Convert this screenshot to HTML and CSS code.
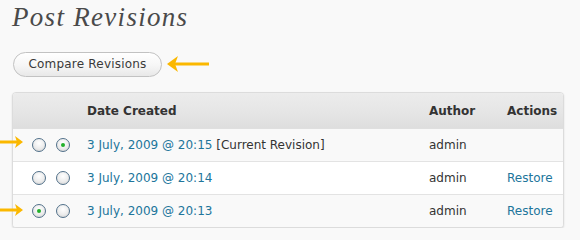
FILE: index.html
```html
<!DOCTYPE html>
<html>
<head>
<meta charset="utf-8">
<link rel="stylesheet" href="styles.css">
</head>
<body>
<div class="page">
  <h2 class="title">Post Revisions</h2>
  <div class="toolbar">
    <button class="btn">Compare Revisions</button>
    <svg class="arrow arrow-left" width="44" height="20" viewBox="0 0 44 20">
      <path d="M4 10 H42" stroke="#fbb800" stroke-width="3" fill="none"/>
      <path d="M0 10 L11 2 L8 10 L11 18 Z" fill="#fbb800"/>
    </svg>
  </div>
  <div class="table-box">
    <table class="revisions">
      <colgroup>
        <col class="c-r1"><col class="c-r2"><col class="c-date"><col class="c-author"><col class="c-actions">
      </colgroup>
      <thead>
        <tr><th></th><th></th><th class="h-date">Date Created</th><th>Author</th><th>Actions</th></tr>
      </thead>
      <tbody>
        <tr class="alt">
          <td class="r1"><span class="radio"></span></td>
          <td><span class="radio checked"></span></td>
          <td><a href="#">3 July, 2009 @ 20:15</a> [Current Revision]</td>
          <td>admin</td>
          <td></td>
        </tr>
        <tr>
          <td class="r1"><span class="radio"></span></td>
          <td><span class="radio"></span></td>
          <td><a href="#">3 July, 2009 @ 20:14</a></td>
          <td>admin</td>
          <td><a href="#">Restore</a></td>
        </tr>
        <tr class="alt">
          <td class="r1"><span class="radio checked"></span></td>
          <td><span class="radio"></span></td>
          <td><a href="#">3 July, 2009 @ 20:13</a></td>
          <td>admin</td>
          <td><a href="#">Restore</a></td>
        </tr>
      </tbody>
    </table>
  </div>
  <svg class="arrow arrow-row arrow-row1" width="24" height="14" viewBox="0 0 24 14">
    <path d="M0 7 H18" stroke="#fbb800" stroke-width="3" fill="none"/>
    <path d="M23 7 L15 1 L17 7 L15 13 Z" fill="#fbb800"/>
  </svg>
  <svg class="arrow arrow-row arrow-row3" width="24" height="14" viewBox="0 0 24 14">
    <path d="M0 7 H18" stroke="#fbb800" stroke-width="3" fill="none"/>
    <path d="M23 7 L15 1 L17 7 L15 13 Z" fill="#fbb800"/>
  </svg>
</div>
</body>
</html>
```

FILE: styles.css
```css
html, body {
  margin: 0;
  padding: 0;
  background: #f9f9f9;
}
body {
  font-family: "DejaVu Sans", "Liberation Sans", sans-serif;
  font-size: 12px;
  color: #333;
}
.page {
  position: relative;
  padding: 1px 16px 0 12px;
  width: 552px;
}
.title {
  margin: 0;
  font-family: "Liberation Serif", "DejaVu Serif", serif;
  font-style: italic;
  font-weight: normal;
  font-size: 27px;
  line-height: 32px;
  letter-spacing: 1.3px;
  color: #4a4a4a;
}
.toolbar {
  display: flex;
  align-items: center;
  margin-top: 19px;
  height: 24px;
}
.btn {
  box-sizing: border-box;
  height: 25px;
  width: 149px;
  margin-left: 1px;
  padding: 0;
  border: 1px solid #c2c2c2;
  border-radius: 13px;
  background: linear-gradient(#ffffff, #f6f6f6 55%, #e8e8e8);
  font-family: "DejaVu Sans", sans-serif;
  font-size: 12px;
  color: #3a3a3a;
  letter-spacing: 0.2px;
}
.arrow-left {
  margin-left: 5px;
}
.table-box {
  margin-top: 16px;
  border: 1px solid #dcdcdc;
  border-radius: 4px;
  overflow: hidden;
  background: #fff;
  box-shadow: 0 1px 2px rgba(0,0,0,0.12);
}
.revisions {
  width: 550px;
  table-layout: fixed;
  border-collapse: separate;
  border-spacing: 0;
}
.c-r1 { width: 43px; }
.c-r2 { width: 24px; }
.c-date { width: 342px; }
.c-author { width: 78px; }
.c-actions { width: 63px; }
.revisions th {
  height: 35px;
  padding: 0 0 0 7px;
  text-align: left;
  font-weight: bold;
  color: #333;
  background: linear-gradient(#ececec, #e6e6e6 50%, #dedede);
  border-bottom: 1px solid #dfdfdf;
}
.revisions td {
  height: 32px;
  padding: 0 0 0 7px;
  border-top: 1px solid #e3e3e3;
  vertical-align: middle;
  white-space: nowrap;
}
.revisions tbody tr:first-child td {
  border-top: none;
}
.revisions tr.alt td {
  background: #f9f9f9;
}
.revisions th:nth-child(1), .revisions th:nth-child(2),
.revisions td:nth-child(1), .revisions td:nth-child(2) {
  padding: 0;
}
.revisions td.r1 {
  padding-left: 19px;
}
.revisions a {
  color: #21759b;
  text-decoration: none;
}
.radio {
  display: block;
  box-sizing: border-box;
  width: 14px;
  height: 14px;
  border: 1.5px solid #52718a;
  border-radius: 50%;
  background: radial-gradient(circle at 50% 35%, #ffffff, #ececec 55%, #cdcdcd);
  position: relative;
}
.radio.checked::after {
  content: "";
  position: absolute;
  left: 3.5px;
  top: 3.5px;
  width: 4px;
  height: 4px;
  border-radius: 50%;
  background: #22b02a;
}
.arrow-row {
  position: absolute;
  left: 0;
}
.arrow-row1 { top: 135px; }
.arrow-row3 { top: 203px; }
```
